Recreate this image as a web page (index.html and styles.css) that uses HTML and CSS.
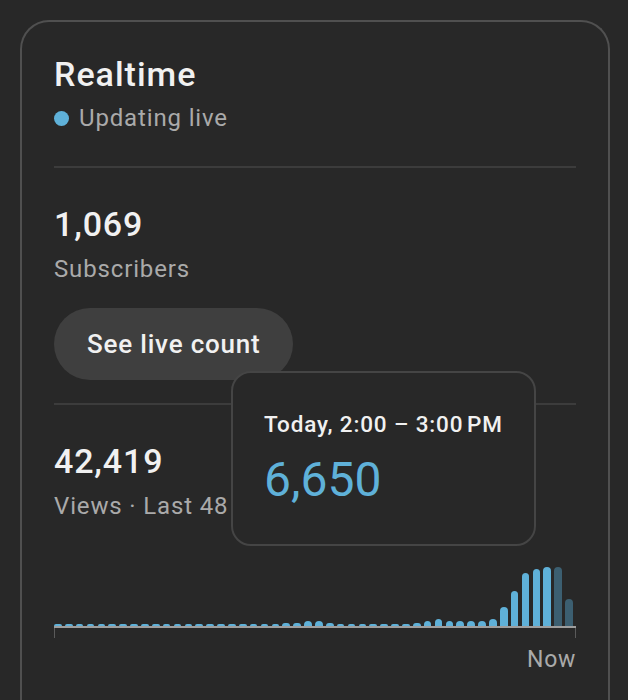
FILE: index.html
```html
<!DOCTYPE html>
<html lang="en">
<head>
<meta charset="utf-8">
<title>Realtime</title>
<link rel="stylesheet" href="styles.css">
</head>
<body>
<section class="card">
  <h1 class="title">Realtime</h1>
  <div class="live"><span class="dot"></span><span>Updating live</span></div>
  <hr class="divider first">
  <div class="stat">1,069</div>
  <div class="label">Subscribers</div>
  <button class="pill">See live count</button>
  <hr class="divider second">
  <div class="stat">42,419</div>
  <div class="label">Views · Last 48 hours</div>
  <div class="chart">
    <div class="bars">
      <div class="slot"><div class="bar" style="height:2px"></div></div>
      <div class="slot"><div class="bar" style="height:2px"></div></div>
      <div class="slot"><div class="bar" style="height:2px"></div></div>
      <div class="slot"><div class="bar" style="height:2px"></div></div>
      <div class="slot"><div class="bar" style="height:2px"></div></div>
      <div class="slot"><div class="bar" style="height:2px"></div></div>
      <div class="slot"><div class="bar" style="height:2px"></div></div>
      <div class="slot"><div class="bar" style="height:2px"></div></div>
      <div class="slot"><div class="bar" style="height:2px"></div></div>
      <div class="slot"><div class="bar" style="height:2px"></div></div>
      <div class="slot"><div class="bar" style="height:2px"></div></div>
      <div class="slot"><div class="bar" style="height:2px"></div></div>
      <div class="slot"><div class="bar" style="height:2px"></div></div>
      <div class="slot"><div class="bar" style="height:2px"></div></div>
      <div class="slot"><div class="bar" style="height:2px"></div></div>
      <div class="slot"><div class="bar" style="height:2px"></div></div>
      <div class="slot"><div class="bar" style="height:2px"></div></div>
      <div class="slot"><div class="bar" style="height:2px"></div></div>
      <div class="slot"><div class="bar" style="height:2px"></div></div>
      <div class="slot"><div class="bar" style="height:2px"></div></div>
      <div class="slot"><div class="bar" style="height:2px"></div></div>
      <div class="slot"><div class="bar" style="height:3px"></div></div>
      <div class="slot"><div class="bar" style="height:3px"></div></div>
      <div class="slot"><div class="bar" style="height:5px"></div></div>
      <div class="slot"><div class="bar" style="height:5px"></div></div>
      <div class="slot"><div class="bar" style="height:3px"></div></div>
      <div class="slot"><div class="bar" style="height:2px"></div></div>
      <div class="slot"><div class="bar" style="height:2px"></div></div>
      <div class="slot"><div class="bar" style="height:2px"></div></div>
      <div class="slot"><div class="bar" style="height:2px"></div></div>
      <div class="slot"><div class="bar" style="height:2px"></div></div>
      <div class="slot"><div class="bar" style="height:2px"></div></div>
      <div class="slot"><div class="bar" style="height:2px"></div></div>
      <div class="slot"><div class="bar" style="height:3px"></div></div>
      <div class="slot"><div class="bar" style="height:5px"></div></div>
      <div class="slot"><div class="bar" style="height:7px"></div></div>
      <div class="slot"><div class="bar" style="height:5px"></div></div>
      <div class="slot"><div class="bar" style="height:5px"></div></div>
      <div class="slot"><div class="bar" style="height:5px"></div></div>
      <div class="slot"><div class="bar" style="height:5px"></div></div>
      <div class="slot"><div class="bar" style="height:7px"></div></div>
      <div class="slot"><div class="bar" style="height:19px"></div></div>
      <div class="slot"><div class="bar" style="height:35px"></div></div>
      <div class="slot"><div class="bar" style="height:53px"></div></div>
      <div class="slot"><div class="bar" style="height:57px"></div></div>
      <div class="slot"><div class="bar" style="height:59px"></div></div>
      <div class="slot"><div class="bar dim" style="height:59px"></div></div>
      <div class="slot"><div class="bar dim" style="height:27px"></div></div>
    </div>
    <div class="axis"></div>
    <div class="ticks"><span class="tick"></span><span class="tick"></span></div>
    <div class="now">Now</div>
  </div>
  <div class="tooltip">
    <div class="tip-time">Today, 2:00 – 3:00&#8239;PM</div>
    <div class="tip-value">6,650</div>
  </div>
</section>
</body>
</html>
```

FILE: styles.css
```css
html, body {
  margin: 0;
  padding: 0;
  background: #282828;
}

body {
  font-family: Roboto, "Noto Sans", "Liberation Sans", sans-serif;
  color: #f1f1f1;
  height: 700px;
  overflow: hidden;
}

.card {
  position: relative;
  margin: 20px 18px 0 20px;
  border: 2px solid #505050;
  border-bottom: none;
  border-radius: 29px 29px 0 0;
  padding: 32px 32px 40px 32px;
  min-height: 700px;
  box-sizing: border-box;
}

.title {
  margin: 0;
  font-size: 34px;
  line-height: 40px;
  font-weight: 500;
  letter-spacing: 1px;
  color: #f1f1f1;
}

.live {
  margin-top: 8px;
  display: flex;
  align-items: center;
  gap: 10px;
  font-size: 24px;
  line-height: 32px;
  letter-spacing: 0.85px;
  color: #aaaaaa;
}

.dot {
  width: 15px;
  height: 15px;
  border-radius: 50%;
  background: #5fb1d9;
  flex: none;
}

.divider {
  margin: 0;
  border: none;
  height: 2px;
  background: #3c3c3c;
}

.divider.first {
  margin-top: 32px;
}

.divider.second {
  margin-top: 23px;
}

.stat {
  margin-top: 36px;
  font-size: 34px;
  line-height: 40px;
  font-weight: 500;
  letter-spacing: 0.85px;
  color: #f1f1f1;
}

.label {
  margin-top: 9px;
  font-size: 24px;
  line-height: 32px;
  letter-spacing: 0.85px;
  color: #aaaaaa;
}

.pill {
  display: block;
  margin-top: 23px;
  height: 72px;
  padding: 0 32px 0 33px;
  border: none;
  border-radius: 36px;
  background: #3f3f3f;
  color: #f1f1f1;
  font-family: inherit;
  font-size: 26px;
  line-height: 72px;
  font-weight: 500;
  letter-spacing: 0.8px;
}

.chart {
  margin-top: 40px;
}

.bars {
  display: flex;
  align-items: flex-end;
  height: 64px;
}

.slot {
  flex: 1 1 0;
  padding-right: 3.2px;
  display: flex;
  align-items: flex-end;
}

.bar {
  width: 100%;
  background: #5fb1d9;
  border-radius: 4px 4px 0 0;
}

.bar.dim {
  background: #3c5f71;
}

.axis {
  height: 2px;
  background: #9e9e9e;
}

.ticks {
  display: flex;
  justify-content: space-between;
  height: 10px;
}

.tick {
  width: 1px;
  background: #5a5a5a;
}

.now {
  margin-top: 7px;
  text-align: right;
  font-size: 23px;
  line-height: 30px;
  letter-spacing: 0.7px;
  color: #aaaaaa;
}

.tooltip {
  position: absolute;
  left: 209px;
  top: 349px;
  width: 305px;
  box-sizing: border-box;
  padding: 37px 31px 36px 31px;
  border: 2px solid #454545;
  border-radius: 20px;
  background: #282828;
}

.tip-time {
  font-size: 22.5px;
  line-height: 28px;
  font-weight: 500;
  letter-spacing: 0.85px;
  color: #f1f1f1;
  white-space: nowrap;
}

.tip-value {
  margin-top: 14px;
  font-size: 48px;
  line-height: 56px;
  color: #5fb1d9;
}
```
